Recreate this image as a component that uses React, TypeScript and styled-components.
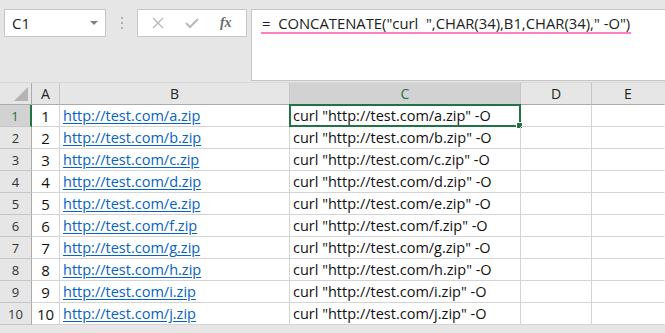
import React from "react";
import styled, { createGlobalStyle } from "styled-components";

const Global = createGlobalStyle`
  html, body { margin: 0; padding: 0; background: #e6e6e6; }
  body { font-family: "Open Sans", "Noto Sans", sans-serif; overflow: hidden; }
`;

const Page = styled.div`
  width: 665px;
  height: 333px;
  display: flex;
  flex-direction: column;
  background: #e6e6e6;
  overflow: hidden;
`;

const TopBar = styled.div`
  display: flex;
  align-items: flex-start;
  padding: 9px 0 0 4px;
  height: 82px;
  box-sizing: border-box;
`;

const NameBox = styled.div`
  width: 102px;
  height: 28px;
  box-sizing: border-box;
  background: #fff;
  border: 1px solid #c6c6c6;
  display: flex;
  align-items: center;
  justify-content: space-between;
  padding: 0 7px 0 7px;
  font-size: 15px;
  color: #222;
`;

const Caret = styled.span`
  width: 0;
  height: 0;
  border-left: 4px solid transparent;
  border-right: 4px solid transparent;
  border-top: 4px solid #808080;
`;

const Grip = styled.div`
  width: 31px;
  height: 28px;
  display: flex;
  flex-direction: column;
  align-items: center;
  justify-content: center;
  gap: 3px;
  span { width: 2px; height: 2px; background: #b0b0b0; }
`;

const FxBox = styled.div`
  width: 110px;
  height: 28px;
  box-sizing: border-box;
  background: #fff;
  border: 1px solid #c6c6c6;
  display: flex;
  align-items: center;
  justify-content: space-around;
  padding: 0 4px;
`;

const FxLabel = styled.span`
  font-family: "Liberation Serif", serif;
  font-style: italic;
  font-size: 14px;
  color: #6a6a6a;
  font-weight: bold;
`;

const FormulaBar = styled.div`
  margin-left: 4px;
  flex: 1;
  height: 72px;
  box-sizing: border-box;
  background: #fff;
  border: 1px solid #c6c6c6;
  border-right: none;
  padding: 2px 0 0 9px;
`;

const Formula = styled.span`
  display: inline-block;
  font-size: 14.8px;
  color: #222;
  line-height: 18px;
  padding: 0 1px;
  border-bottom: 2px solid #ff7fc2;
`;

const Sheet = styled.div`
  display: grid;
  grid-template-columns: 32px 28px 230px 231px 71px 73px;
  grid-auto-rows: 22px;
  background: #fff;
  border-top: 1px solid #d8d8d8;
`;

const Corner = styled.div`
  background: #e6e6e6;
  border-right: 1px solid #ababab;
  border-bottom: 1px solid #ababab;
  box-sizing: border-box;
  position: relative;
  &::after {
    content: "";
    position: absolute;
    right: 3px;
    bottom: 3px;
    width: 0;
    height: 0;
    border-left: 14px solid transparent;
    border-bottom: 14px solid #b4b4b4;
  }
`;

const ColHead = styled.div<{ $active?: boolean; $last?: boolean }>`
  background: ${(p) => (p.$active ? "#d2d2d2" : "#e6e6e6")};
  color: ${(p) => (p.$active ? "#217346" : "#222")};
  border-right: 1px solid ${(p) => (p.$last ? "transparent" : "#c6c6c6")};
  border-bottom: 1px solid #ababab;
  box-sizing: border-box;
  display: flex;
  align-items: center;
  justify-content: center;
  font-size: 14px;
`;

const RowHead = styled.div<{ $active?: boolean }>`
  background: ${(p) => (p.$active ? "#d2d2d2" : "#e6e6e6")};
  color: ${(p) => (p.$active ? "#217346" : "#333")};
  border-right: ${(p) => (p.$active ? "2px solid #217346" : "1px solid #ababab")};
  border-bottom: 1px solid #c6c6c6;
  box-sizing: border-box;
  display: flex;
  align-items: center;
  justify-content: center;
  font-size: 13px;
`;

const Cell = styled.div<{ $align?: "left" | "center"; $link?: boolean; $last?: boolean }>`
  position: relative;
  border-right: 1px solid ${(p) => (p.$last ? "transparent" : "#d4d4d4")};
  border-bottom: 1px solid #d4d4d4;
  box-sizing: border-box;
  display: flex;
  align-items: center;
  justify-content: ${(p) => (p.$align === "center" ? "center" : "flex-start")};
  padding-left: ${(p) => (p.$align === "center" ? "0" : "3px")};
  font-size: ${(p) => (p.$align === "center" ? "15px" : "14.5px")};
  white-space: nowrap;
  color: ${(p) => (p.$link ? "#0563c1" : "#111")};
  text-decoration: ${(p) => (p.$link ? "underline" : "none")};
  text-underline-offset: 2px;
`;

const Selection = styled.div`
  position: absolute;
  left: -1px;
  top: -1px;
  right: -1px;
  bottom: -1px;
  border: 2px solid #217346;
  pointer-events: none;
  &::after {
    content: "";
    position: absolute;
    right: -4px;
    bottom: -4px;
    width: 5px;
    height: 5px;
    background: #217346;
    border: 1px solid #fff;
  }
`;

const letters = ["a", "b", "c", "d", "e", "f", "g", "h", "i", "j"];

export default function App() {
  return (
    <Page>
      <Global />
      <TopBar>
        <NameBox>
          <span>C1</span>
          <Caret />
        </NameBox>
        <Grip>
          <span />
          <span />
          <span />
        </Grip>
        <FxBox>
          <svg width="12" height="12" viewBox="0 0 12 12">
            <path d="M1 1 L11 11 M11 1 L1 11" stroke="#b8b8b8" strokeWidth="1.4" fill="none" />
          </svg>
          <svg width="14" height="12" viewBox="0 0 14 12">
            <path d="M1 6 L5 10 L13 2" stroke="#b8b8b8" strokeWidth="2" fill="none" />
          </svg>
          <FxLabel>fx</FxLabel>
        </FxBox>
        <FormulaBar>
          <Formula>=&nbsp; CONCATENATE("curl &nbsp;",CHAR(34),B1,CHAR(34)," -O")</Formula>
        </FormulaBar>
      </TopBar>
      <Sheet>
        <Corner />
        <ColHead>A</ColHead>
        <ColHead>B</ColHead>
        <ColHead $active>C</ColHead>
        <ColHead>D</ColHead>
        <ColHead $last>E</ColHead>
        {letters.map((l, i) => (
          <React.Fragment key={l}>
            <RowHead $active={i === 0}>{i + 1}</RowHead>
            <Cell $align="center">{i + 1}</Cell>
            <Cell $link>{`http://test.com/${l}.zip`}</Cell>
            <Cell>
              {`curl "http://test.com/${l}.zip" -O`}
              {i === 0 && <Selection />}
            </Cell>
            <Cell />
            <Cell $last />
          </React.Fragment>
        ))}
      </Sheet>
    </Page>
  );
}
